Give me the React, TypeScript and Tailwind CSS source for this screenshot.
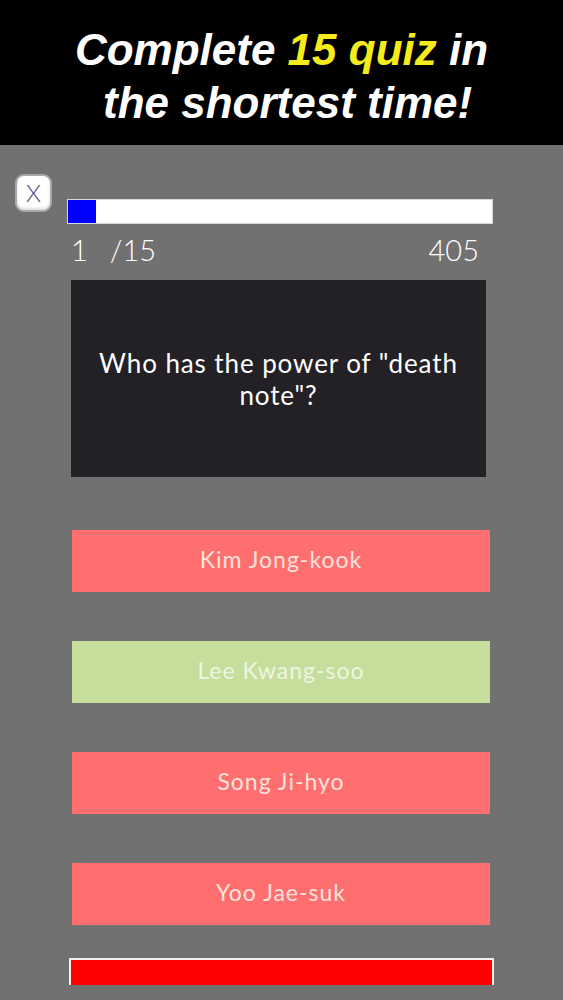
const answers = [
  { label: "Kim Jong-kook", correct: false },
  { label: "Lee Kwang-soo", correct: true },
  { label: "Song Ji-hyo", correct: false },
  { label: "Yoo Jae-suk", correct: false },
];

const gothic = { fontFamily: "Lato, 'Open Sans', sans-serif" };

export default function App() {
  return (
    <div className="min-h-screen w-full bg-[#727172]">
      <header className="bg-black pt-[23px] pb-[16px] text-center">
        <h1
          className="text-[44px] font-bold italic leading-[53px] text-white"
          style={{ fontFamily: "'Liberation Sans', Arial, sans-serif" }}
        >
          Complete <span className="text-[#f6ec1b]">15 quiz</span> in
          <br />
          &nbsp;the shortest time!
        </h1>
      </header>

      <main className="flex flex-col pb-4" style={gothic}>
        <div className="flex items-start pl-[15px] pt-[29px]">
          <button className="flex h-[38px] w-[37px] items-center justify-center rounded-[9px] border-2 border-[#a9a8aa] bg-white text-[24px] font-light leading-none text-[#4b4b7d] shadow-[inset_0_-2px_3px_rgba(0,0,0,0.12)]">
            X
          </button>
          <div className="ml-[15px] mt-[25px] w-[426px]">
            <div className="flex h-[25px] border border-[#d8d8dc] bg-white">
              <div className="h-full w-[28px] bg-[#0000ff]" />
            </div>
            <div className="mt-[8px] flex items-center justify-between pl-[4px] pr-[14px] text-[29px] font-light leading-[36px] text-white">
              <span>
                1<span className="ml-[22px]">/15</span>
              </span>
              <span>405</span>
            </div>
          </div>
        </div>

        <section className="ml-[71px] mt-[12px] flex h-[197px] w-[415px] items-center justify-center bg-[#232125] px-4 text-center">
          <p className="text-[26px] leading-[32px] tracking-[0.9px] text-white">
            Who has the power of "death note"?
          </p>
        </section>

        <div className="ml-[72px] mt-[53px] flex w-[418px] flex-col gap-[49px]">
          {answers.map((a) => (
            <button
              key={a.label}
              className={
                a.correct
                  ? "flex h-[62px] items-center justify-center bg-[#c5de9c] pb-[4px] text-[23px] tracking-[1px] text-[#eef5e2]"
                  : "flex h-[62px] items-center justify-center bg-[#ff6f6f] pb-[4px] text-[23px] tracking-[1px] text-[#ffe2dc]"
              }
            >
              {a.label}
            </button>
          ))}
        </div>

        <div className="ml-[69px] mt-[33px] h-[27px] w-[425px] border-x-2 border-t-2 border-[#f4eeee] bg-[#ff0000]" />
      </main>
    </div>
  );
}
